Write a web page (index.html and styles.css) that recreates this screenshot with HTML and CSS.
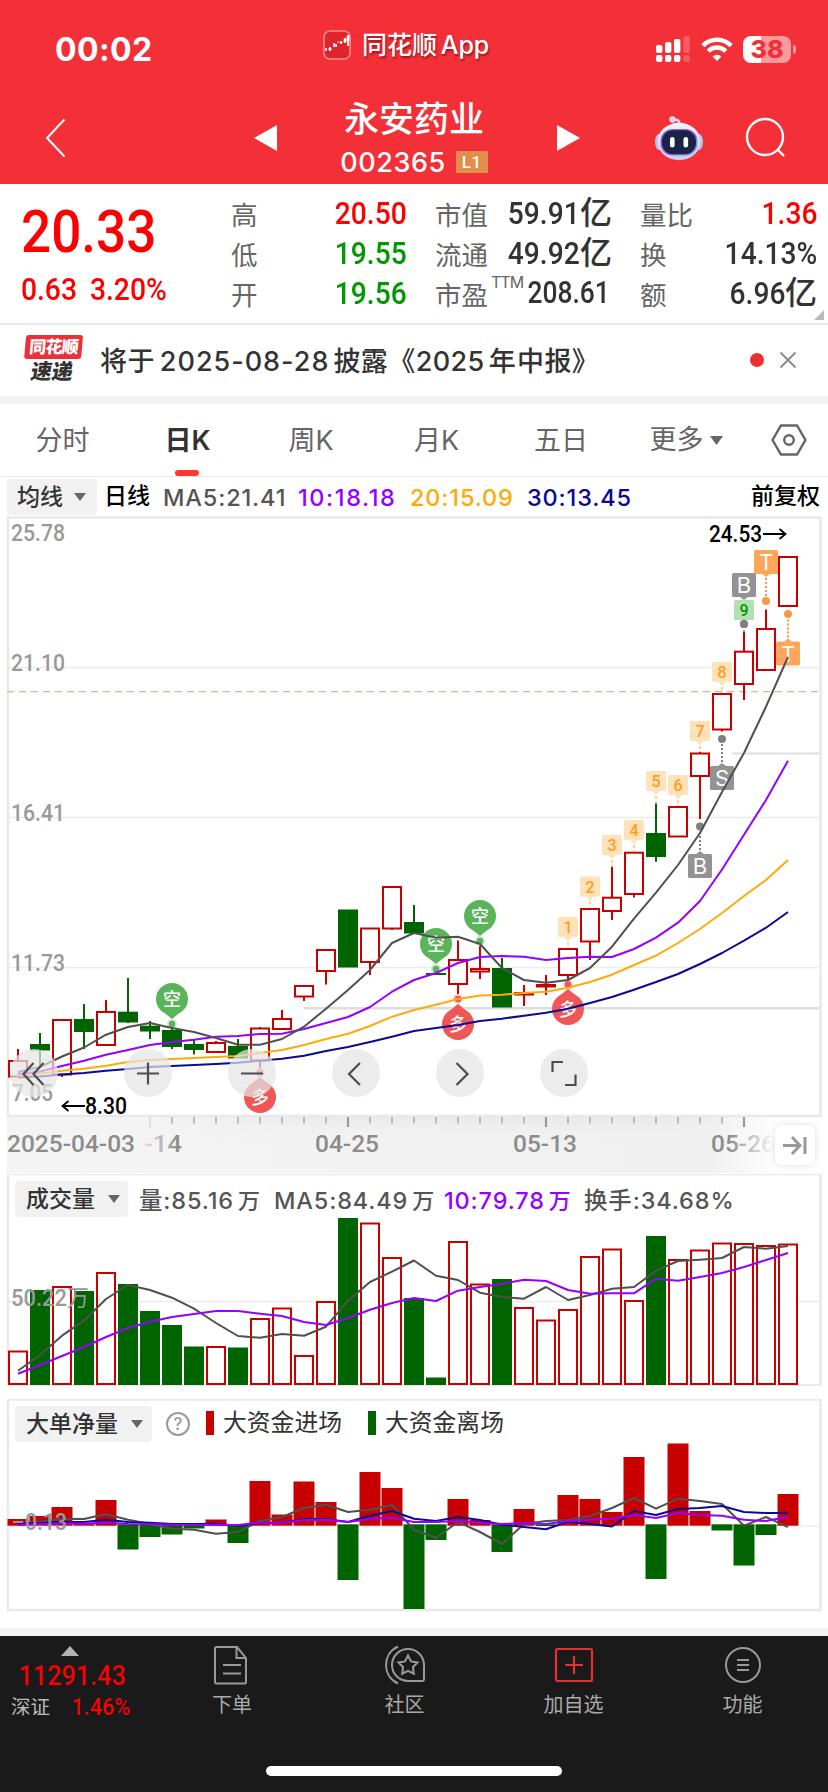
FILE: index.html
```html
<!DOCTYPE html>
<html lang="zh-CN">
<head>
<meta charset="utf-8">
<title>永安药业 002365</title>
<link rel="stylesheet" href="styles.css">
</head>
<body>
<header class="top">
  <div class="status">
    <div class="clock">00:02</div>
    <div class="app-return">
      <svg width="28" height="30" viewBox="0 0 28 30"><rect x="1" y="1" width="26" height="28" rx="6" fill="#e0242c" stroke="#f98d90" stroke-width="1.6"/><path d="M3 18v3M7 17v4M11 13v4M13 14v3M18 11v3M22 8v5M25 5v11" stroke="#fff" stroke-width="1.6"/><path d="M6 18h2v2H6zM14 12h2M17 12h2v1h-2zM21 9h2v3h-2zM24 6h2v5h-2z" fill="#fff" stroke="#fff" stroke-width=".8"/></svg>
      <span>同花顺 App</span>
    </div>
    <div class="signals">
      <svg width="34" height="26" viewBox="0 0 34 26" fill="#fff"><rect x="0" y="9" width="6.4" height="8" rx="2"/><rect x="9" y="6" width="6.4" height="11" rx="2"/><rect x="18" y="3" width="6.4" height="14" rx="2"/><rect x="27.4" y="0" width="6.4" height="17" rx="2" opacity=".22"/><rect x="0" y="19" width="6.4" height="7" rx="2"/><rect x="9" y="19" width="6.4" height="7" rx="2"/><rect x="18" y="19" width="6.4" height="7" rx="2"/><rect x="27.4" y="19" width="6.4" height="7" rx="2" opacity=".22"/></svg>
      <svg width="32" height="24" viewBox="0 0 32 24" fill="none" stroke="#fff" stroke-width="4.4"><path d="M1.8 8.6a20 20 0 0 1 28.4 0"/><path d="M7.2 14.2a12.4 12.4 0 0 1 17.6 0"/><path d="M11.6 19.6a6.3 6.3 0 0 1 8.8 0L16 24z" fill="#fff" stroke="none"/></svg>
      <div class="battery"><span>38</span></div>
    </div>
  </div>
  <div class="titlebar">
    <svg class="back" width="22" height="42" viewBox="0 0 22 42"><path d="M20.5 2.5 3 21l17.5 18.500" fill="none" stroke="#fff" stroke-width="2"/></svg>
    <svg class="prev" width="23" height="26" viewBox="0 0 23 26"><path d="M23 0v26L0 13z" fill="#fff"/></svg>
    <div class="stock">
      <h1>永安药业</h1>
      <div class="code"><span>002365</span><b>L1</b></div>
    </div>
    <svg class="next" width="23" height="26" viewBox="0 0 23 26"><path d="M0 0v26l23-13z" fill="#fff"/></svg>
    <svg class="robot" width="50" height="46" viewBox="0 0 50 46">
      <defs><linearGradient id="rb" x1="0" y1="0" x2="0" y2="1"><stop offset="0" stop-color="#f3f2fd"/><stop offset="1" stop-color="#c9cdf0"/></linearGradient><linearGradient id="rf" x1="0" y1="0" x2="1" y2="1"><stop offset="0" stop-color="#6b6be8"/><stop offset=".5" stop-color="#a05be6"/><stop offset="1" stop-color="#4fb2f5"/></linearGradient></defs>
      <path d="M25 10c1-4-1-6-6-5" fill="none" stroke="#dfdff5" stroke-width="2.6"/><circle cx="18.500" cy="4.500" r="3.200" fill="#d5d6f0"/>
      <ellipse cx="5" cy="27" rx="4" ry="8" fill="#b8bdf0"/><ellipse cx="45" cy="27" rx="4" ry="8" fill="#b8bdf0"/>
      <ellipse cx="25" cy="26.500" rx="21.500" ry="18.800" fill="url(#rb)"/>
      <rect x="6.500" y="14" width="37" height="26.500" rx="12" fill="url(#rf)"/>
      <rect x="8" y="15.300" width="34" height="24" rx="11" fill="#1b2347"/>
      <rect x="16" y="22" width="4.600" height="10.500" rx="2.300" fill="#fff"/><rect x="29.500" y="22" width="4.600" height="10.500" rx="2.300" fill="#fff"/>
    </svg>
    <svg class="search" width="42" height="42" viewBox="0 0 42 42" fill="none" stroke="#fff" stroke-width="2.400"><circle cx="20" cy="20" r="18"/><path d="m32.500 32.500 6.500 6.500"/></svg>
  </div>
</header>

<section class="quote">
  <div class="last">
    <div class="price din">20.33</div>
    <div class="change"><span class="din">0.63</span><span class="din">3.20%</span></div>
  </div>
  <dl>
    <div><dt>高</dt><dd class="up"><span class="din">20.50</span></dd></div>
    <div><dt>低</dt><dd class="down"><span class="din">19.55</span></dd></div>
    <div><dt>开</dt><dd class="down"><span class="din">19.56</span></dd></div>
  </dl>
  <dl>
    <div><dt>市值</dt><dd><span class="din">59.91</span>亿</dd></div>
    <div><dt>流通</dt><dd><span class="din">49.92</span>亿</dd></div>
    <div><dt>市盈<sup>TTM</sup></dt><dd class="pe"><span class="din">208.61</span></dd></div>
  </dl>
  <dl>
    <div><dt>量比</dt><dd class="up"><span class="din">1.36</span></dd></div>
    <div><dt>换</dt><dd><span class="din">14.13%</span></dd></div>
    <div><dt>额</dt><dd><span class="din">6.96</span>亿</dd></div>
  </dl>
  <i class="corner"></i>
</section>

<section class="notice">
  <div class="badge"><b>同花顺</b><em>速递</em></div>
  <p>将于<span class="n">2025-08-28</span>披露《2025<span class="y">年</span>中报》</p>
  <i class="dot"></i>
  <svg class="close" width="18" height="18" viewBox="0 0 18 18"><path d="m1.500 1.500 15 15M16.500 1.500l-15 15" stroke="#8c8c8c" stroke-width="2"/></svg>
</section>

<nav class="tabs">
  <span class="t1">分时</span><span class="t2 on">日K</span><span class="t3">周K</span><span class="t4">月K</span><span class="t5">五日</span>
  <span class="t6">更多<svg width="13" height="9" viewBox="0 0 13 9"><path d="M0 0h13L6.500 9z" fill="#666"/></svg></span>
  <svg class="hex" width="36" height="32" viewBox="0 0 36 32" fill="none" stroke="#666" stroke-width="2.400"><path d="M10 1.500h16L34.500 16 26 30.500H10L1.500 16z"/><circle cx="18" cy="16" r="4.800"/></svg>
</nav>

<div class="legend ma">
  <span class="chip">均线<i></i></span>
  <span class="name">日线</span>
  <span class="c5">MA5:21.41</span><span class="c10">10:18.18</span><span class="c20">20:15.09</span><span class="c30">30:13.45</span>
  <span class="adj">前复权</span>
</div>

<section class="kline">
  <svg id="kline" width="828" height="658" viewBox="0 516 828 658"></svg>
</section>

<section class="panel volume">
  <div class="legend">
    <span class="chip">成交量<i></i></span>
    <span class="v1">量:85.16<small>万</small></span><span class="v2">MA5:84.49<small>万</small></span><span class="v3">10:79.78<small>万</small></span><span class="v4">换手:34.68%</span>
  </div>
  <svg id="volume" width="828" height="212" viewBox="0 1174 828 212"></svg>
</section>

<section class="panel flow">
  <div class="legend">
    <span class="chip">大单净量<i></i></span>
    <span class="help">?</span>
    <span class="key in">大资金进场</span>
    <span class="key out">大资金离场</span>
  </div>
  <svg id="flow" width="828" height="213" viewBox="0 1399 828 213"></svg>
</section>

<footer class="dock">
  <div class="index">
    <svg width="18" height="10" viewBox="0 0 18 10"><path d="M9 0l9 10H0z" fill="#b4b4b4"/></svg>
    <div class="ix din">11291.43</div>
    <div class="sz"><span>深证</span><span class="din">1.46%</span></div>
  </div>
  <div class="item"><svg width="40" height="40" viewBox="0 0 40 40" fill="none" stroke="#999" stroke-width="2"><path d="M5 2h20l9 11v24a1.500 1.500 0 0 1-1.500 1.500H4.500A1.500 1.500 0 0 1 3 37V3.500A1.500 1.500 0 0 1 4.500 2zM24.500 2v11H34M11 20h18M11 28.500h18"/></svg><span>下单</span></div>
  <div class="item"><svg width="42" height="40" viewBox="0 0 42 40" fill="none" stroke="#999" stroke-width="2"><path d="M14 1.500C-2 9-2 31 14 38.500M24 4h0a16 16 0 0 1 16 16v14a2 2 0 0 1-2 2H24A16 16 0 0 1 24 4zM24 10.500l3 5.900 6.500 1.100-4.600 4.700.9 6.500-5.800-2.900-5.800 2.900.9-6.500-4.600-4.700 6.500-1.100z"/></svg><span>社区</span></div>
  <div class="item"><svg width="40" height="40" viewBox="0 0 40 40" fill="none" stroke="#e92f32" stroke-width="2.200"><rect x="2" y="4" width="36" height="32" rx="1.500"/><path d="M11 20h18M20 11v18"/></svg><span>加自选</span></div>
  <div class="item"><svg width="40" height="40" viewBox="0 0 40 40" fill="none" stroke="#999" stroke-width="2"><circle cx="20" cy="20" r="17"/><path d="M14 15h12M14 20h12M14 25h12"/></svg><span>功能</span></div>
  <i class="home"></i>
</footer>
<script src="charts.js"></script>
</body>
</html>
```
FILE: styles.css
```css
* { box-sizing: border-box; }
body { margin: 0; width: 828px; height: 1792px; overflow: hidden; background: #fff; color: #333; font-family: Inter, "Noto Sans CJK SC", sans-serif; display: flex; flex-direction: column; }
body > * { flex: none; }
svg { display: block; flex: none; }
dl, dd, h1, p { margin: 0; }
i, em { font-style: normal; }
.din { font-family: Roboto, sans-serif; font-weight: 500; display: inline-block; transform: scaleX(.87); transform-origin: left center; white-space: nowrap; }

.top { height: 184px; background: #f33038; color: #fff; }
.status { height: 92px; padding: 6px 37px 0 55px; display: grid; grid-template-columns: 268px 1fr auto; align-items: center; }
.clock { font-size: 32px; font-weight: 700; letter-spacing: .4px; padding-top: 1px; }
.app-return { display: flex; gap: 11px; align-items: center; padding-bottom: 8px; font-size: 25px; font-weight: 500; white-space: nowrap; text-shadow: 1px 2px 2px rgba(60,0,0,.5); }
.app-return span { line-height: 30px; word-spacing: -3px; }
.signals { display: flex; align-items: center; gap: 11px; }
.battery { position: relative; width: 48px; height: 27px; border-radius: 8px; background: linear-gradient(90deg,#fff 37%,#f99a9e 37%); color: #f33038; font-size: 25px; font-weight: 800; line-height: 27px; text-align: center; margin-left: -1px; }
.battery::after { content: ""; position: absolute; right: -5px; top: 9px; width: 3px; height: 9px; border-radius: 0 3px 3px 0; background: #f99a9e; }
.titlebar { height: 92px; padding-left: 44px; display: flex; align-items: center; }
.prev { margin-left: 188px; }
.stock { width: 280px; text-align: center; height: 92px; padding-right: 6px; }
.stock h1 { font-size: 35px; line-height: 48px; font-weight: 500; padding-top: 3px; }
.code { display: flex; justify-content: center; align-items: center; gap: 10px; height: 38px; font-size: 27px; font-weight: 500; letter-spacing: .6px; }
.code b { background: #e18d4b; width: 32px; height: 22px; font: 500 17px/22px Roboto, sans-serif; }
.robot { margin: 0 0 0 74px; }
.search { margin-left: 41px; }

.quote { position: relative; height: 141px; border-bottom: 2px solid #e9e9e9; padding-left: 21px; display: grid; grid-template-columns: 210px 176px 177px 177px; }
.quote dl:nth-of-type(n+2) { margin-left: 28px; margin-right: -28px; }
.quote dl:nth-of-type(3) { margin-left: 56px; margin-right: -56px; }
.last { color: #f00; }
.price { font-size: 60px; line-height: 70px; margin-top: 13px; transform: scaleX(.885); }
.change { font-size: 31px; line-height: 36px; margin-top: 5px; display: flex; gap: 8px; }
.change .din { transform: scaleX(.91); }
.quote dl { padding-top: 9px; }
.quote dl > div { height: 40px; display: flex; justify-content: space-between; align-items: center; white-space: nowrap; }
dt { font-size: 26.5px; color: #666; display: flex; }
dd { font-size: 32px; line-height: 40px; font-weight: 500; color: #333; display: flex; align-items: center; }
dd .din { transform-origin: right center; margin-left: -14px; transform: scaleX(.88); }
.pe { font-size: 31px; padding-right: 2px; }
.pe .din { transform: scaleX(.85); }
.up { color: #f00; }
.down { color: #090; }
sup { font: 400 16px/16px Inter, sans-serif; margin-left: 3px; letter-spacing: -1px; align-self: flex-start; }
.corner { position: absolute; right: 4px; bottom: 3px; border: solid transparent; border-width: 0 0 10px 10px; border-bottom-color: #bbb; }

.notice { height: 79px; border-bottom: 8px solid #f4f4f4; padding: 0 31px 2px 23px; display: flex; align-items: center; }
.badge { width: 59px; height: 49px; display: flex; flex-direction: column; align-items: center; transform: skewX(-5deg); line-height: 1; }
.badge b { background: #ea3038; color: #fff; width: 57px; height: 24px; font-size: 17px; line-height: 24px; font-weight: 900; text-align: center; border-radius: 3px; letter-spacing: -.8px; }
.badge em { font-size: 21px; line-height: 24px; font-weight: 900; transform: skewX(-5deg); padding-top: 1px; }
.notice p { flex: 1; margin-left: 18px; font-size: 27px; font-weight: 500; white-space: nowrap; letter-spacing: .4px; }
.notice .n { margin: 0 4px 0 5px; letter-spacing: 1px; }
.notice .y { margin: 0 1px 0 4px; }
.dot { width: 14px; height: 14px; border-radius: 50%; background: #e93030; margin-right: 15px; }

.tabs { height: 73px; border-bottom: 1px solid #e9e9e9; display: grid; grid-template-columns: 125px 125px 122px 129px 120px 130px 75px; align-items: center; font-size: 27px; color: #666; justify-items: center; }
.tabs span { height: 72px; line-height: 74px; position: relative; }
.tabs .t6 { display: flex; align-items: center; gap: 6px; }
.on { color: #333; font-weight: 600; }
.on::after { content: ""; position: absolute; left: 50%; margin-left: -12px; bottom: 0; width: 24px; height: 6px; border-radius: 3px; background: #ff372f; }

.legend { display: flex; align-items: center; font-size: 23px; white-space: nowrap; color: #555; font-weight: 500; }
.chip { background: #f1f1f1; border-radius: 4px; height: 36px; line-height: 35px; padding: 0 11px; color: #333; display: flex; align-items: center; gap: 12px; }
.chip i { border: solid transparent; border-width: 8px 6px 0; border-top-color: #666; }
.ma { height: 39px; padding: 1px 8px 0 7px; }
.ma .chip { width: 90px; padding-left: 10px; margin-right: 7px; gap: 11px; }
.name { color: #000; margin-right: 13px; line-height: 32px; padding-bottom: 3px; }
.c5, .c10, .c20, .c30, .v1, .v2, .v3, .v4 { font-size: 23.5px; letter-spacing: .85px; }
.c5 { width: 135px; } .c10 { width: 112px; color: #9600ff; letter-spacing: 1.6px; } .c20 { width: 117px; color: #ffa90a; } .c30 { color: #0a0a96; }
.adj { margin-left: auto; color: #000; line-height: 32px; padding-bottom: 3px; }

.kline { height: 658px; }
.panel { position: relative; }
.panel .legend { position: absolute; top: 7px; left: 15px; height: 36px; }
.volume { height: 212px; }
.volume .chip { width: 113px; margin-right: 11px; gap: 13px; }
.volume small { font-size: 22px; margin-left: 4px; }
.v1 { width: 135px; } .v2 { width: 170px; } .v3 { width: 140px; color: #9600ff; }
.flow { height: 213px; margin-top: 13px; }
.flow .chip { width: 137px; margin-right: 14px; gap: 13px; }
.help { width: 24px; height: 24px; border: 2px solid #999; border-radius: 50%; color: #999; font-size: 17px; line-height: 20px; text-align: center; margin-right: 16px; }
.key { display: flex; align-items: center; gap: 9px; color: #333; margin-right: 26px; font-size: 23.8px; line-height: 30px; padding-bottom: 2px; font-weight: 400; }
.key::before { content: ""; width: 8px; height: 24px; background: #c80000; }
.out::before { background: #006400; }

.dock { position: relative; margin-top: 16px; border-top: 8px solid #f4f4f4; height: 164px; background: #1a1a1a; display: grid; grid-template-columns: 146px 172px 173px 165px 173px; color: #aaa; align-items: start; }
.index { padding: 10px 0 0 11px; color: #f00; }
.index svg { margin-left: 50px; }
.ix { font-size: 28px; line-height: 32px; margin-left: 8px; margin-top: 4px; transform: scaleX(.9); }
.sz { display: flex; font-size: 19.5px; line-height: 28px; gap: 22px; margin-top: 1px; }
.sz span:first-child { color: #bbb; }
.sz .din { font-size: 24px; transform: scaleX(.9); }
.item { padding-top: 9px; display: flex; flex-direction: column; align-items: center; font-size: 20px; line-height: 30px; gap: 5px; }
.home { position: absolute; left: 266px; top: 130px; width: 296px; height: 10px; border-radius: 5px; background: #fff; }

.ax { font: 500 23px Roboto, sans-serif; fill: #999; }
.pin { font: 500 18px "Noto Sans CJK SC", sans-serif; fill: #fff; text-anchor: middle; }
.tag { font: 500 16px Roboto, sans-serif; text-anchor: middle; }
.sig { font: 400 22px Inter, sans-serif; fill: #fff; text-anchor: middle; }
```
FILE: charts.js
```js
const RED = '#c80000', GREEN = '#006400', GREY = '#505050', PURPLE = '#9600ff', ORANGE = '#ffaa0a', BLUE = '#0a0a96';
const cx = i => 18 + 22 * i;
const line = (x1, y1, x2, y2, c, w = 2, extra = '') => `<path d="M${x1} ${y1}L${x2} ${y2}" stroke="${c}" stroke-width="${w}" ${extra}/>`;
const rect = (x, y, w, h, f, extra = '') => `<rect x="${x}" y="${y}" width="${w}" height="${h}" fill="${f}" ${extra}/>`;
const poly = (ys, c) => `<polyline points="${ys.map((y, i) => cx(i) + ',' + y).join(' ')}" fill="none" stroke="${c}" stroke-width="2" stroke-linejoin="round"/>`;
const label = (t, x, y, len, extra = '') => `<text class="ax" x="${x}" y="${y}" textLength="${len}" lengthAdjust="spacingAndGlyphs" ${extra}>${t}</text>`;
const hollow = (i, t, b) => `<rect x="${cx(i) - 9}" y="${t + 1}" width="18" height="${Math.max(b - t - 2, 1)}" fill="#fff" stroke="${RED}" stroke-width="2"/>`;
const solid = (i, t, b) => rect(cx(i) - 10, t, 20, b - t, GREEN);

// [direction, body top, body bottom, high, low]
const candles = [
  [1,1060,1077.500,1049,1077],[0,1044,1050.500,1033,1066],[1,1019,1075.500,1019,1077],[0,1019,1032,1004,1049],[1,1011,1046,1000,1046],
  [0,1011.700,1022.500,978,1023],[0,1025.700,1031.500,1021,1039],[0,1030,1047,1029,1049],[0,1044,1050,1039,1054.500],[1,1042,1053,1041,1053],
  [0,1046,1058.500,1039,1058],[1,1027.500,1061.500,1027,1068],[1,1018,1030,1010,1030],[1,985,997.500,985,1001],[1,949,972,949,984.500],
  [0,909.500,967.500,910,967],[1,927.500,963,928,975],[1,886,929.500,886,930],[0,922,933.500,905,934],[0,973,975,973,975],
  [1,959,985,940.500,994],[1,968,972.500,946,979],[0,968,1007.500,958,1007],[1,992,995.500,985,1006],[1,984,987.500,975,995],
  [1,948,976,948,979],[1,908,942.500,908,960],[1,896.700,912,867,920],[1,851.700,895,852,897.500],[0,833,857,803.500,861.700],
  [1,806,837.500,806,837],[1,752.500,777,752,819],[1,693,730.500,693,731.500],[1,650.700,685,632,700],[1,628,671,609.500,671],[1,556,607,556,607]
];
const ma5 = [1072,1067,1056.500,1047.500,1034.700,1027,1023,1028,1032,1038,1044.700,1044.700,1039,1026.700,1008.700,990,970,943,933,937.700,936.700,944,968,980,982.700,980,968,946.700,918.700,892.700,865,833,792,753,706.700,657];
const ma10 = [1074,1071.500,1066,1060.700,1054.700,1050,1045,1042,1039.700,1036.700,1036,1034,1033.700,1029,1023,1017,1007,991.700,980,973,963,957,956,956.700,960,958,956.700,957,949,937.700,922.700,901,869.500,834.700,800,760.700];
const ma20 = [1076,1073.500,1070.700,1068.700,1065.700,1062,1060,1059,1058,1057,1056,1053,1050,1045,1039,1033.700,1026,1016.700,1010,1004.700,999,995.500,994.700,993,991.700,987.700,982,974.700,965,955.700,943,929,913,896,880,860];
const ma30 = [1077.500,1076.500,1074.500,1073,1070.700,1069,1067,1066,1065,1064,1062.700,1060.700,1058.700,1055.700,1051,1047,1042,1036.700,1031,1028,1025,1021,1018.700,1015.700,1012.700,1008.700,1003,997,989.700,982,974,964,953,940.700,927.700,912];

function pin(x, y, dotY, text, color) {
  const d = dotY > y ? 1 : -1;
  return `<circle cx="${x}" cy="${dotY}" r="5" fill="${color}" opacity=".3"/><circle cx="${x}" cy="${dotY}" r="3.200" fill="${color}"/>`
    + `<circle cx="${x}" cy="${y}" r="16" fill="${color}"/><path d="M${x - 8} ${y + 13.500 * d}h16L${x} ${y + 20 * d}z" fill="${color}"/>`
    + `<text class="pin" x="${x}" y="${y + 6.500}">${text}</text>`;
}
function tag(i, y, n, end, green) {
  const x = cx(i), bg = green ? '#b2e0b2' : '#ffe2ba', fg = green ? '#090' : '#ff9c1a';
  return line(x, y + 20, x, end, green ? '#5c5' : '#ffcf8c', 2, 'stroke-dasharray="3 2"') + rect(x - 10, y, 20, 20, bg, 'rx="1.500"')
    + (green ? '' : `<path d="M${x - 4} ${y + 20}h8l-4 4z" fill="${bg}"/>`) + `<text class="tag" x="${x}" y="${y + 16}" fill="${fg}">${n}</text>`;
}
function signal(i, y, dotY, text, color, dot) {
  const x = cx(i), below = dotY > y;
  return line(x, below ? y + 24 : y, x, dotY, dot, 2, 'stroke-dasharray="2 2"') + `<circle cx="${x}" cy="${dotY}" r="4" fill="${dot}"/>`
    + rect(x - 12, y, 24, 24, color, 'rx="1.500"') + (below ? `<path d="M${x - 4} ${y + 24}h8l-4 3z" fill="${color}"/>` : `<path d="M${x - 4} ${y}h8l-4-3z" fill="${color}"/>`)
    + `<text class="sig" x="${x}" y="${y + 20}">${text}</text>`;
}

let k = `<defs><linearGradient id="axis" x1="0" x2="1"><stop offset="0" stop-color="#f4f4f4"/><stop offset=".86" stop-color="#f0f0f0"/><stop offset=".95" stop-color="#fff"/></linearGradient>
<linearGradient id="shade" x1="0" y1="0" x2="0" y2="1"><stop offset="0" stop-color="#e6e6e6"/><stop offset="1" stop-color="#f4f4f4" stop-opacity="0"/></linearGradient>
<linearGradient id="shadeX" x1="0" x2="1"><stop offset="0" stop-color="#fff" stop-opacity="0"/><stop offset=".3" stop-color="#fff"/><stop offset=".85" stop-color="#fff"/><stop offset="1" stop-color="#fff" stop-opacity="0"/></linearGradient>
<mask id="shadeMask" maskUnits="userSpaceOnUse" x="150" y="1117" width="600" height="26"><rect x="150" y="1117" width="600" height="26" fill="url(#shadeX)"/></mask>
<linearGradient id="fadeR" x1="710" x2="770" gradientUnits="userSpaceOnUse"><stop offset=".3" stop-color="#8c8c8c"/><stop offset="1" stop-color="#999" stop-opacity=".15"/></linearGradient>
<linearGradient id="fadeL" x1="143" x2="182" gradientUnits="userSpaceOnUse"><stop offset="0" stop-color="#999" stop-opacity=".2"/><stop offset=".9" stop-color="#8c8c8c"/></linearGradient></defs>`;
k += rect(7, 1117, 815, 56, 'url(#axis)') + rect(150, 1117, 600, 26, 'url(#shade)', 'opacity=".7" mask="url(#shadeMask)"');
k += '<rect x="8" y="517.500" width="812.500" height="598.500" fill="#fff" stroke="#e9e9e9" stroke-width="2.600"/>';
[667, 817, 967].forEach(y => k += line(9, y + .5, 819, y + .5, '#ececec', 1.400));
k += line(304, 1008.300, 819, 1008.300, '#ddd', 2.600) + line(732, 753.500, 819, 753.500, '#ddd', 2);
k += line(7, 691.700, 819, 691.700, '#d9b78c', 1.300, 'stroke-dasharray="7 5"');
candles.forEach(([up, t, b, h, l], i) => {
  k += line(cx(i), h, cx(i), l, up ? RED : GREEN) + (up ? (b - t < 4 ? rect(cx(i) - 10, t, 20, b - t, RED) : hollow(i, t, b)) : solid(i, t, b));
});
k += pin(172, 999, 1024, '空', '#5ab55a') + pin(436, 944, 969, '空', '#5ab55a') + pin(480, 916, 941, '空', '#5ab55a');
k += pin(260, 1097, 1072.500, '多', '#ef5656') + pin(458, 1024, 999, '多', '#ef5656') + pin(568, 1009, 984.500, '多', '#ef5656');
[[25,917,948],[26,876.500,907],[27,835,867],[28,820,851],[29,771,803],[30,775,806],[31,721,752],[32,662,693]].forEach(([i, y, e], n) => k += tag(i, y, n + 1, e));
k += signal(33, 573, 624, 'B', '#939393', '#808080') + tag(33, 600, 9, 632, true) + '<circle cx="744" cy="624" r="4" fill="#808080"/>';
k += signal(34, 550, 601, 'T', '#ffa65c', '#ff9640') + signal(35, 641.500, 614, 'T', '#ffa65c', '#ff9640') + signal(32, 766, 739, 'S', '#939393', '#808080') + signal(31, 854, 826.500, 'B', '#939393', '#808080');
k += poly(ma30, BLUE) + poly(ma20, ORANGE) + poly(ma10, PURPLE) + poly(ma5, GREY);
k += label('25.78', 11, 541, 54) + label('21.10', 11, 671, 54) + label('16.41', 11, 821, 54) + label('11.73', 11, 971, 54) + label('7.05', 12, 1101, 41);
k += label('8.30', 85, 1114, 42, 'style="fill:#000;font-weight:500"') + '<path d="M62 1106h23M68.500 1101l-6 5 6 5" fill="none" stroke="#000" stroke-width="1.800"/>';
k += label('24.53', 709, 542, 53, 'style="fill:#000;font-weight:500"') + '<path d="M763 534h22M779.500 529l6 5-6 5" fill="none" stroke="#000" stroke-width="1.800"/>';
[34, 148, 252, 356, 460, 564].forEach(x => k += `<circle cx="${x}" cy="1073" r="24" fill="#e4e4e4" opacity=".72"/>`);
k += '<path d="M33.500 1063l-10 11 10 11M43.500 1063l-10 11 10 11M137 1073.500h22M148 1062.500v22M241 1073.500h22M360 1063l-11 11 11 11M456.500 1063l11 11-11 11M552.500 1072v-10h10.500M565 1085h10.500v-10.500" fill="none" stroke="#4d4d4d" stroke-width="2.200"/>';
for (let x = 172; x < 760; x += 22) k += (x - 150) % 198 ? line(x, 1117, x, 1123.500, '#999', 1.200) : line(x, 1117, x, 1127, '#999', 2.200);
k += line(150, 1117, 150, 1127, '#ddd', 2);
k += label('2025-04-03', 7, 1152, 128, 'style="fill:#8c8c8c"') + label('-14', 144, 1152, 38, 'style="fill:url(#fadeL)"') + label('04-25', 315, 1152, 64, 'style="fill:#8c8c8c"') + label('05-13', 513, 1152, 64, 'style="fill:#8c8c8c"') + label('05-26', 711, 1152, 64, 'style="fill:url(#fadeR)"');
k += rect(770, 1122, 50, 48, '#fff', 'rx="9" opacity=".7"') + rect(775, 1125, 40, 40, '#fff', 'rx="7" style="filter:drop-shadow(0 0 3px rgba(0,0,0,.14))"');
k += '<path d="M783 1145.500h17M792 1137l8 8.500-8 8.500M805 1137v17" fill="none" stroke="#999" stroke-width="3"/>';
document.getElementById('kline').innerHTML = k;

const vol = [[1,1350.500],[0,1290],[1,1286],[0,1291],[1,1272],[0,1284],[0,1311],[0,1325],[0,1346.500],[1,1346],[0,1347.500],[1,1318],[1,1307.500],[1,1355],[1,1301],[0,1218],[1,1222.500],[1,1257],[0,1298],[0,1377.500],[1,1241],[1,1283.500],[0,1279],[1,1307],[1,1319.500],[1,1309],[1,1256],[1,1248.500],[1,1300],[0,1236],[1,1259],[1,1249.500],[1,1242.500],[1,1243],[1,1245],[1,1243.500]];
const v5 = [1370.700,1355,1335.700,1320.700,1299,1285,1290,1297.700,1308.700,1323,1336,1337.700,1334,1335.700,1326.700,1300.700,1282,1271.700,1260.500,1275.700,1280,1292.700,1297,1298.700,1287,1300,1295,1288.700,1287,1270.700,1261,1259.700,1258,1247,1248.700,1246];
const v10 = [1373.700,1365,1356,1347,1337,1328,1321.700,1317,1314,1311,1311,1313.700,1316,1322,1325,1318,1309.700,1303,1298,1301,1290.700,1287,1284,1279.700,1281,1290,1293.700,1293.300,1293.300,1278.700,1280.700,1277,1273,1267,1260,1253];
let v = '<rect x="8" y="1174" width="812.500" height="211.500" fill="#fff" stroke="#e9e9e9" stroke-width="2.600"/>' + line(9, 1301.500, 819, 1301.500, '#ececec', 1.400);
vol.forEach(([up, t], i) => v += up ? hollow(i, t, 1385) : solid(i, t, 1385));
v += label('50.22万', 11, 1306, 78) + poly(v5, GREY) + poly(v10, PURPLE);
document.getElementById('volume').innerHTML = v;

const flow = [[1,1519],[1,1516],[1,1507],[1,1524],[1,1500],[0,1549.500],[0,1537],[0,1534.500],[0,1528.500],[1,1519.500],[0,1543],[1,1481],[1,1514.500],[1,1481.500],[1,1502],[0,1580],[1,1472],[1,1488],[0,1609],[0,1540],[1,1499],[1,1520],[0,1552],[1,1509],[0,1526],[1,1495],[1,1499],[1,1512],[1,1457],[0,1579],[1,1443.500],[1,1511],[0,1530.500],[0,1565.500],[0,1535],[1,1494]];
const f5 = [1523,1522,1518.700,1519,1514,1519.700,1524,1528.700,1529.700,1533.700,1532,1521,1517,1508,1504.700,1512,1509.700,1505,1530,1537.700,1522,1532,1544,1524,1521,1520,1516,1508,1498,1508.700,1498.700,1501,1504,1525.700,1517,1527];
const fb = [1524,1523,1522,1522,1519.700,1522,1522.700,1524,1524,1523.700,1525.700,1523,1522.700,1519,1519,1522,1515.700,1511,1518.700,1521,1517,1520,1524.700,1527,1529.300,1521.700,1524,1526.500,1511,1515,1509,1508,1506,1512,1513,1513];
const fp = [1525,1524,1523.500,1523.500,1522.700,1524,1524.300,1524.700,1524.700,1525,1525,1522.700,1522.700,1520,1519.700,1522,1519,1517.700,1522,1522,1521,1522.700,1524,1523,1524,1521,1519.700,1518.700,1515,1518,1513,1515,1515.700,1519.700,1521,1516.700];
let f = '<rect x="8" y="1399.500" width="812.500" height="210.500" fill="#fff" stroke="#e9e9e9" stroke-width="2.600"/>' + line(9, 1526, 819, 1526, '#ececec', 1.400);
flow.forEach(([up, y], i) => f += up ? rect(cx(i) - 10.500, y, 21, 1525.700 - y, RED) : rect(cx(i) - 10.500, 1524.300, 21, y - 1524.300, GREEN));
f += poly(f5, GREY) + poly(fb, BLUE) + poly(fp, PURPLE) + line(13, 1522, 23, 1522, '#999', 2) + label('0.13', 25, 1530, 42);
document.getElementById('flow').innerHTML = f;
```
